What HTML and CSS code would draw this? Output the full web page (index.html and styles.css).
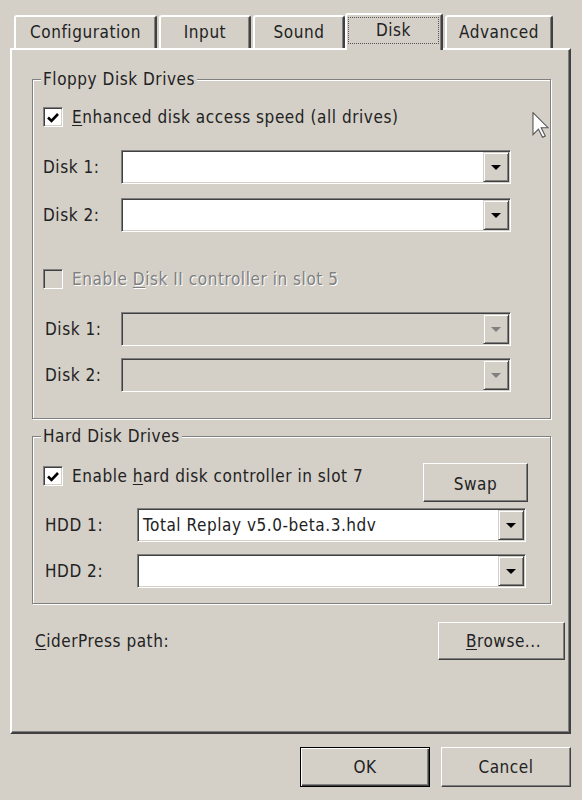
FILE: index.html
```html
<!DOCTYPE html>
<html>
<head>
<meta charset="utf-8">
<title>Disk settings</title>
<link rel="stylesheet" href="styles.css">
</head>
<body>
<div class="dialog">
  <div class="tabs">
    <div class="tab tab-config">Configuration</div>
    <div class="tab tab-input">Input</div>
    <div class="tab tab-sound">Sound</div>
    <div class="tab tab-disk active"><span class="focus">Disk</span></div>
    <div class="tab tab-adv">Advanced</div>
  </div>

  <div class="panel">
    <fieldset class="group floppy">
      <legend>Floppy Disk Drives</legend>

      <div class="check-row mt-18">
        <span class="check"><svg width="12" height="11" viewBox="0 0 12 11"><path d="M1 5.5 L4.5 9 L11 2" fill="none" stroke="#000" stroke-width="2.6"/></svg></span>
        <span><u>E</u>nhanced disk access speed (all drives)</span>
      </div>

      <div class="field mt-23">
        <span class="lbl lbl-floppy">Disk 1:</span>
        <div class="combo combo-floppy"><span class="value"></span><span class="drop"><svg width="10" height="5" viewBox="0 0 10 5"><polygon points="0,0 10,0 5,5" fill="#000"/></svg></span></div>
      </div>

      <div class="field mt-14">
        <span class="lbl lbl-floppy">Disk 2:</span>
        <div class="combo combo-floppy"><span class="value"></span><span class="drop"><svg width="10" height="5" viewBox="0 0 10 5"><polygon points="0,0 10,0 5,5" fill="#000"/></svg></span></div>
      </div>

      <div class="check-row mt-37 disabled">
        <span class="check check-off"></span>
        <span class="dis-text">Enable <u>D</u>isk II controller in slot 5</span>
      </div>

      <div class="field mt-23">
        <span class="lbl lbl-floppy indent">Disk 1:</span>
        <div class="combo combo-floppy combo-off"><span class="value"></span><span class="drop"><svg width="10" height="5" viewBox="0 0 10 5"><polygon points="0,0 10,0 5,5" fill="#808080"/></svg></span></div>
      </div>

      <div class="field mt-12">
        <span class="lbl lbl-floppy indent">Disk 2:</span>
        <div class="combo combo-floppy combo-off"><span class="value"></span><span class="drop"><svg width="10" height="5" viewBox="0 0 10 5"><polygon points="0,0 10,0 5,5" fill="#808080"/></svg></span></div>
      </div>
    </fieldset>

    <fieldset class="group hdd">
      <legend>Hard Disk Drives</legend>

      <div class="hdd-top mt-17">
        <div class="check-row check-in-top">
          <span class="check"><svg width="12" height="11" viewBox="0 0 12 11"><path d="M1 5.5 L4.5 9 L11 2" fill="none" stroke="#000" stroke-width="2.6"/></svg></span>
          <span>Enable <u>h</u>ard disk controller in slot 7</span>
        </div>
        <div class="btn btn-swap">Swap</div>
      </div>

      <div class="field mt-6">
        <span class="lbl lbl-hdd indent">HDD 1:</span>
        <div class="combo combo-hdd"><span class="value">Total Replay v5.0-beta.3.hdv</span><span class="drop"><svg width="10" height="5" viewBox="0 0 10 5"><polygon points="0,0 10,0 5,5" fill="#000"/></svg></span></div>
      </div>

      <div class="field mt-12">
        <span class="lbl lbl-hdd indent">HDD 2:</span>
        <div class="combo combo-hdd"><span class="value"></span><span class="drop"><svg width="10" height="5" viewBox="0 0 10 5"><polygon points="0,0 10,0 5,5" fill="#000"/></svg></span></div>
      </div>
    </fieldset>

    <div class="path-row">
      <span><u>C</u>iderPress path:</span>
      <div class="btn btn-browse"><span><u>B</u>rowse...</span></div>
    </div>
  </div>

  <div class="buttons">
    <div class="btn btn-main btn-default">OK</div>
    <div class="btn btn-main">Cancel</div>
  </div>
</div>

<svg class="cursor" width="17" height="26" viewBox="0 0 12 19"><path d="M0.5 0.5 L0.5 16.5 L4.5 12.5 L7.5 18.5 L9.5 17.5 L6.5 11.5 L11.5 11.5 Z" fill="#fff" stroke="#555" stroke-width="0.8"/></svg>
</body>
</html>
```

FILE: styles.css
```css
* { box-sizing: border-box; }

html, body { margin: 0; }

body {
  background: #d4d0c8;
  font-family: "DejaVu Sans Condensed", "DejaVu Sans", sans-serif;
  font-stretch: semi-condensed;
  font-size: 17px;
  letter-spacing: 0.55px;
  color: #222;
  width: 582px;
  height: 800px;
  position: relative;
  overflow: hidden;
}

u { text-decoration-thickness: 1px; text-underline-offset: 2px; }

.dialog { padding: 13px 11px 0 10px; }

/* Tabs */
.tabs {
  display: flex;
  align-items: flex-end;
  height: 35px;
  padding-left: 4px;
  position: relative;
  z-index: 1;
}

.tab {
  height: 33px;
  margin-right: 2px;
  display: flex;
  align-items: center;
  justify-content: center;
  background: #d4d0c8;
  border: 2px solid #fff;
  border-bottom: 0;
  border-right-color: #404040;
  border-radius: 3px 3px 0 0;
  box-shadow: inset -1px 0 0 #808080;
  line-height: 1;
}

.tab-config { width: 143px; }
.tab-input { width: 92px; }
.tab-sound { width: 92px; }
.tab-disk { width: 98px; }
.tab-adv { width: 108px; }

.tab.active {
  height: 37px;
  margin-left: -2px;
  margin-bottom: -2px;
  align-items: stretch;
}

.focus {
  flex: 1;
  margin: 2px 2px 6px 1px;
  border: 1px dotted #555;
  display: flex;
  align-items: center;
  justify-content: center;
}

/* Panel */
.panel {
  width: 561px;
  height: 686px;
  border: 2px solid;
  border-color: #fff #404040 #404040 #fff;
  box-shadow: inset -1px -1px 0 #808080;
  padding: 19px 0 0 20px;
}

.group {
  margin: 0;
  width: 519px;
  min-width: 0;
  border: 1px solid #808080;
  box-shadow: 1px 1px 0 #fff, inset 1px 1px 0 #fff;
  padding: 0 0 0 10px;
}

.group legend {
  padding: 0 2px;
  margin-left: -2px;
  background: #d4d0c8;
  line-height: 20px;
}

.floppy { padding-bottom: 26px; }
.hdd { margin-top: 7px; padding-bottom: 15px; }

.mt-6 { margin-top: 6px; }
.mt-12 { margin-top: 12px; }
.mt-14 { margin-top: 14px; }
.mt-17 { margin-top: 17px; }
.mt-18 { margin-top: 18px; }
.mt-23 { margin-top: 23px; }
.mt-37 { margin-top: 37px; }

/* Checkbox rows */
.check-row {
  display: flex;
  align-items: center;
  gap: 9px;
  height: 20px;
  white-space: nowrap;
}

.check {
  width: 20px;
  height: 20px;
  flex: none;
  display: flex;
  align-items: center;
  justify-content: center;
  background: #fff;
  border: 1px solid;
  border-color: #808080 #fff #fff #808080;
  box-shadow: inset 1px 1px 0 #404040, inset -1px -1px 0 #d4d0c8;
}

.check-off { background: #d4d0c8; }

.dis-text {
  color: #808080;
  text-shadow: 1px 1px 0 #fff;
}

/* Label + combo rows */
.field {
  display: flex;
  align-items: center;
  height: 34px;
}

.lbl { flex: none; white-space: nowrap; }
.lbl-floppy { width: 78px; }
.lbl-hdd { width: 94px; }
.indent { padding-left: 2px; }

.combo {
  height: 34px;
  display: flex;
  background: #fff;
  border: 1px solid;
  border-color: #808080 #fff #fff #808080;
  box-shadow: inset 1px 1px 0 #404040, inset -1px -1px 0 #d4d0c8;
  padding: 1px;
}

.combo-floppy { width: 390px; }
.combo-hdd { width: 389px; }
.combo-off { background: #d4d0c8; }

.value {
  flex: 1;
  display: flex;
  align-items: center;
  padding-left: 4px;
  white-space: nowrap;
}

.drop {
  width: 26px;
  flex: none;
  display: flex;
  align-items: center;
  justify-content: center;
  background: #d4d0c8;
  border: 1px solid;
  border-color: #d4d0c8 #404040 #404040 #d4d0c8;
  box-shadow: inset 1px 1px 0 #fff, inset -1px -1px 0 #808080;
}

/* Hard disk top row */
.hdd-top {
  width: 485px;
  height: 39px;
  display: flex;
  justify-content: space-between;
  align-items: flex-start;
}

.check-in-top { margin-top: 3px; }

/* Buttons */
.btn {
  display: flex;
  align-items: center;
  justify-content: center;
  background: #d4d0c8;
  border: 1px solid;
  border-color: #fff #404040 #404040 #fff;
  box-shadow: inset -1px -1px 0 #808080;
  white-space: nowrap;
}

.btn-swap { width: 105px; height: 39px; padding-top: 2px; }

.path-row {
  width: 533px;
  margin-top: 18px;
  padding-left: 3px;
  display: flex;
  align-items: center;
  justify-content: space-between;
  height: 38px;
}

.btn-browse { width: 127px; height: 38px; padding-left: 4px; }

.buttons {
  display: flex;
  justify-content: flex-end;
  gap: 11px;
  margin-top: 13px;
}

.btn-main { width: 130px; height: 40px; }

.btn-default {
  border: 1px solid #000;
  box-shadow: inset 1px 1px 0 #fff, inset -1px -1px 0 #404040, inset -2px -2px 0 #808080;
}

/* Mouse pointer overlay */
.cursor {
  position: absolute;
  left: 532px;
  top: 112px;
}
```
